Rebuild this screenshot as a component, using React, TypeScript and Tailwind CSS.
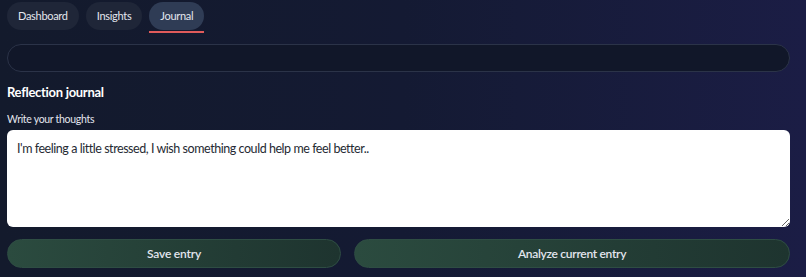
import React, { useState } from "react";

const tabs = ["Dashboard", "Insights", "Journal"];

function App() {
  const [active, setActive] = useState("Journal");
  const [entry, setEntry] = useState(
    "I'm feeling a little stressed, I wish something could help me feel better.."
  );

  return (
    <div
      className="w-[806px] h-[277px] overflow-hidden bg-gradient-to-r from-[#131a2c] via-[#141a33] to-[#1b1d45] text-white pl-[7px] pr-[16px]"
      style={{ fontFamily: "Lato, 'Noto Sans', sans-serif" }}
    >
      <div className="flex gap-[7px] pt-[2px]">
        {tabs.map((t) => (
          <div key={t} className="flex flex-col">
            <button
              onClick={() => setActive(t)}
              className={`h-[28px] px-[11px] rounded-full text-[11px] tracking-[-0.3px] text-[#e3e6ee] ${
                active === t ? "bg-[#2f3c55]" : "bg-[#1f2638]"
              }`}
            >
              {t}
            </button>
            <div
              className={`h-[2px] mt-[1px] ${
                active === t ? "bg-[#e05b5b]" : "bg-transparent"
              }`}
            />
          </div>
        ))}
      </div>

      <div className="mt-[11px] h-[28px] rounded-full border border-[#2b3348] bg-[#111729]" />

      <h2 className="mt-[10px] text-[13px] font-bold leading-[20px] tracking-[-0.3px]">
        Reflection journal
      </h2>
      <p className="mt-[9px] text-[10.5px] leading-[16px] tracking-[-0.3px] text-[#e3e6ee]">
        Write your thoughts
      </p>

      <textarea
        value={entry}
        onChange={(e) => setEntry(e.target.value)}
        className="mt-[3px] block w-full h-[97px] rounded-[6px] bg-white text-[#262a33] text-[12.5px] tracking-[-0.45px] leading-[18px] px-[10px] py-[10px] outline-none"
      />

      <div className="flex gap-[13px] mt-[12px]">
        <button className="w-[334px] h-[29px] rounded-full border border-[#2e4d43] bg-gradient-to-r from-[#2b4b3f] to-[#1e342f] text-[12px] tracking-[-0.2px] font-semibold text-[#e3e6ee]">
          Save entry
        </button>
        <button className="flex-1 h-[29px] rounded-full border border-[#2e4d43] bg-gradient-to-r from-[#2b4b3f] to-[#1e342f] text-[12px] tracking-[-0.3px] font-semibold text-[#e3e6ee]">
          Analyze current entry
        </button>
      </div>
    </div>
  );
}

export default App;
